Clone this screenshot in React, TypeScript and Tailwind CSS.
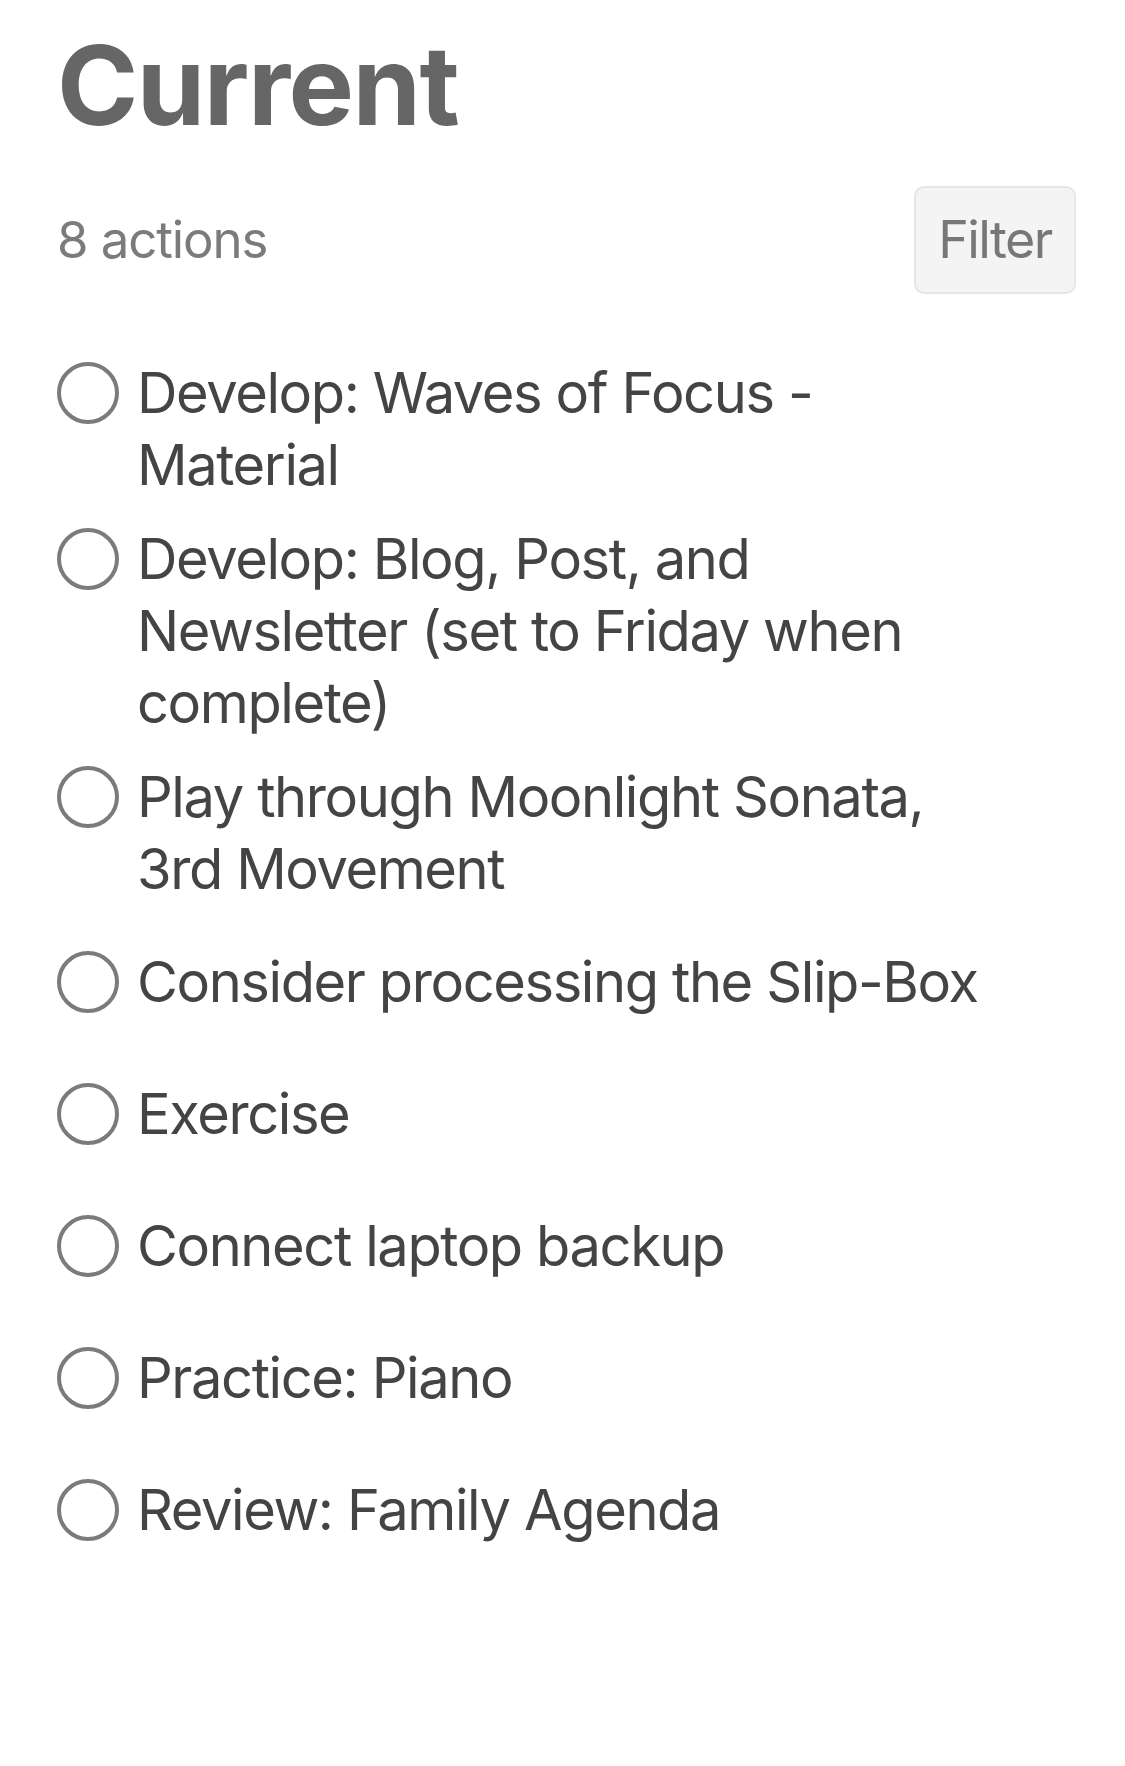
const actions = [
  'Develop: Waves of Focus - Material',
  'Develop: Blog, Post, and Newsletter (set to Friday when complete)',
  'Play through Moonlight Sonata, 3rd Movement',
  'Consider processing the Slip-Box',
  'Exercise',
  'Connect laptop backup',
  'Practice: Piano',
  'Review: Family Agenda',
];

function CheckCircle() {
  return (
    <svg width="62" height="62" viewBox="0 0 62 62" className="mt-[5px] shrink-0">
      <circle cx="31" cy="31" r="29" fill="none" stroke="#7b7b7b" strokeWidth="4" />
    </svg>
  );
}

export default function App() {
  return (
    <div className="min-h-screen bg-white font-[Inter,sans-serif]">
      <div className="pl-[57px] pr-[49px]">
        <h1 className="pt-[19px] text-[110px] leading-[132px] font-bold tracking-[-1.5px] text-[#666]">
          Current
        </h1>

        <div className="mt-[35px] flex items-center justify-between">
          <span className="text-[51px] leading-[72px] tracking-[-1.1px] text-[#7b7b7b]">8 actions</span>
          <button className="flex h-[108px] w-[162px] items-center justify-center rounded-[10px] border-2 border-[#e6e6e6] bg-[#f4f4f4] text-[52px] leading-[72px] tracking-[-1.6px] text-[#777]">
            Filter
          </button>
        </div>

        <ul className="mt-[52px]">
          {actions.map((a) => (
            <li key={a} className="flex min-h-[132px] items-center py-[11px]">
              <div className="flex items-start gap-[18px]">
                <CheckCircle />
                <span className="max-w-[870px] text-[56px] leading-[72px] tracking-[-1.4px] text-[#444]">{a}</span>
              </div>
            </li>
          ))}
        </ul>
      </div>
    </div>
  );
}
